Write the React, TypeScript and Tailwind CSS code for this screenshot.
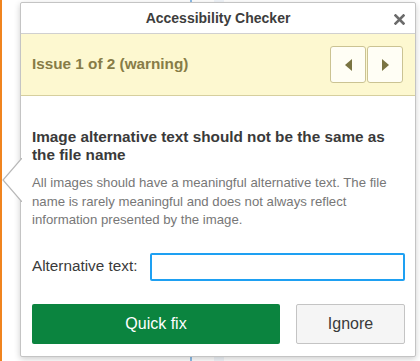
import React from "react";

function Caret({ dir }: { dir: "left" | "right" }) {
  return (
    <svg width="7" height="12" viewBox="0 0 7 12" className="fill-[#7a7442]">
      {dir === "left" ? <path d="M7 0 L0 6 L7 12 Z" /> : <path d="M0 0 L7 6 L0 12 Z" />}
    </svg>
  );
}

function NavButton({ dir }: { dir: "left" | "right" }) {
  return (
    <button className="flex h-[37px] w-[36px] items-center justify-center rounded-[3px] border border-[#cbc393] bg-[#fffef5]">
      <Caret dir={dir} />
    </button>
  );
}

export default function App() {
  return (
    <div className="relative h-[361px] w-[420px] overflow-hidden bg-white font-['Liberation_Sans',Arial,sans-serif]">
      {/* editor canvas behind the popover */}
      <div className="absolute left-0 top-0 h-full w-[2px] bg-[#f0841f]" />
      <div className="absolute left-[190px] top-0 h-full border-l-2 border-dashed border-[#8dbde8]" />
      <div className="absolute left-[214px] top-0 h-full w-[10px] bg-[#f1f5fa]" />

      <div className="absolute left-[20px] top-[2px] flex w-[396px] flex-col rounded-[2px] border border-[#c4c4c4] bg-white shadow-[0_2px_6px_rgba(0,0,0,0.2)]">
        {/* pointer */}
        <svg width="20" height="44" viewBox="0 0 20 44" className="absolute left-[-19px] top-[155px]">
          <path d="M20 0 L1 22 L20 44" fill="white" stroke="#b8b8b8" strokeWidth="1.2" />
        </svg>

        <div className="relative flex h-[31px] items-center justify-center border-b border-[#d0d0d0]">
          <span className="text-[14px] font-bold text-[#3d3d3d]">Accessibility Checker</span>
          <button className="absolute right-[10px] top-[11px] flex h-[11px] w-[11px] items-center justify-center">
            <svg width="11" height="11" viewBox="0 0 11 11">
              <path d="M1.5 1.5 L9.5 9.5 M9.5 1.5 L1.5 9.5" stroke="#6b6b6b" strokeWidth="2.6" strokeLinecap="square" />
            </svg>
          </button>
        </div>

        <div className="flex h-[62px] items-center justify-between border-b border-[#d6cf9e] bg-[#fdf8d0] pl-[11px] pr-[12px]">
          <span className="text-[15.3px] font-bold text-[#877c47]">Issue 1 of 2 (warning)</span>
          <div className="flex gap-px">
            <NavButton dir="left" />
            <NavButton dir="right" />
          </div>
        </div>

        <div className="flex flex-col pb-[12px] pl-[11px] pr-[10px] pt-[32px]">
          <h2 className="text-[15.3px] font-bold leading-[18px] text-[#3a3a3a]">
            Image alternative text should not be the same as the file name
          </h2>
          <p className="mt-[10px] text-[13.2px] leading-[18.5px] text-[#777]">
            All images should have a meaningful alternative text. The file name is rarely meaningful and does not always reflect information presented by the image.
          </p>

          <div className="mt-[23px] flex items-center gap-[13px]">
            <label className="text-[15.3px] text-[#3a3a3a]">Alternative text:</label>
            <input
              type="text"
              className="h-[28px] flex-1 rounded-[2px] border-2 border-[#1ea0f2] bg-white px-2 text-[14px] outline-none"
            />
          </div>

          <div className="mt-[23px] flex gap-[16px]">
            <button className="h-[40px] w-[248px] rounded-[2px] bg-[#0b843f] text-[16px] text-white">Quick fix</button>
            <button className="h-[40px] flex-1 rounded-[2px] border border-[#c4c4c4] bg-[#f5f5f5] text-[16px] text-[#3a3a3a]">
              Ignore
            </button>
          </div>
        </div>
      </div>
    </div>
  );
}
